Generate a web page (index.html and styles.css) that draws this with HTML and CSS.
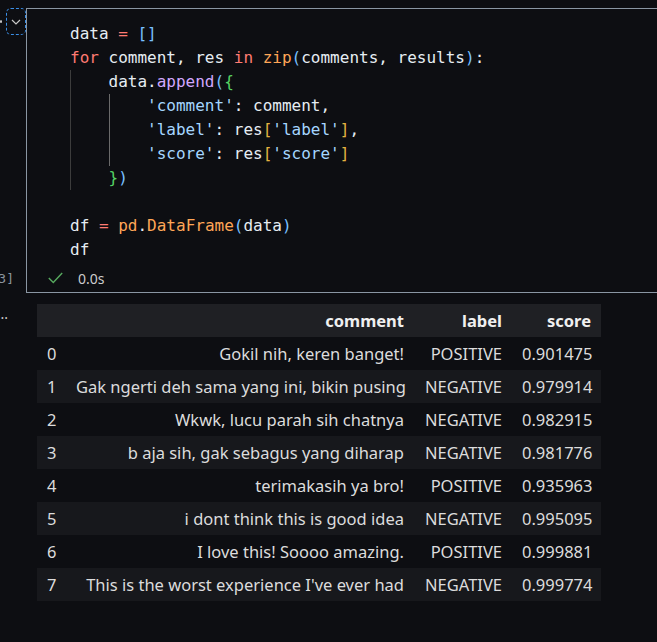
FILE: index.html
```html
<!DOCTYPE html>
<html lang="en">
<head>
<meta charset="utf-8">
<title>Notebook cell</title>
<link rel="stylesheet" href="styles.css">
</head>
<body>
<div class="cell">
  <div class="gutter">
    <div class="gutter-top">
      <span class="dot"></span>
      <button class="toggle" type="button" aria-label="Collapse">
        <svg width="10" height="6" viewBox="0 0 10 6"><path d="M1 1 L5 5 L9 1" fill="none" stroke="#c8c8c8" stroke-width="1.2"/></svg>
      </button>
    </div>
    <div class="exec-count"><span>[3]</span></div>
  </div>
  <div class="cell-box">
    <div class="code">
      <div class="line">data <span class="op">=</span> <span class="b1">[]</span></div>
      <div class="line"><span class="kw">for</span> comment, res <span class="kw">in</span> <span class="cls">zip</span><span class="b1">(</span>comments, results<span class="b1">)</span>:</div>
      <div class="line"><span class="ig">    </span>data.<span class="fn">append</span><span class="b1">(</span><span class="b2">{</span></div>
      <div class="line"><span class="ig">    </span><span class="ig ig-active">    </span><span class="str">'comment'</span>: comment,</div>
      <div class="line"><span class="ig">    </span><span class="ig ig-active">    </span><span class="str">'label'</span>: res<span class="b3">[</span><span class="str">'label'</span><span class="b3">]</span>,</div>
      <div class="line"><span class="ig">    </span><span class="ig ig-active">    </span><span class="str">'score'</span>: res<span class="b3">[</span><span class="str">'score'</span><span class="b3">]</span></div>
      <div class="line"><span class="ig">    </span><span class="b2">}</span><span class="b1">)</span></div>
      <div class="line"></div>
      <div class="line">df <span class="op">=</span> <span class="cls">pd</span>.<span class="cls">DataFrame</span><span class="b1">(</span>data<span class="b1">)</span></div>
      <div class="line">df</div>
    </div>
    <div class="status">
      <svg class="check" width="15" height="12" viewBox="0 0 15 12"><path d="M0.8 6 L5.3 10.6 L14.2 1" fill="none" stroke="#57a95f" stroke-width="1.4"/></svg>
      <span class="time">0.0s</span>
    </div>
  </div>
</div>
<div class="output">
  <div class="out-gutter"><div class="more"><span>...</span></div></div>
  <table class="df">
    <colgroup><col class="c-idx"><col class="c-comment"><col class="c-label"><col class="c-score"></colgroup>
    <thead>
      <tr><th></th><th>comment</th><th>label</th><th>score</th></tr>
    </thead>
    <tbody>
      <tr><td class="idx">0</td><td>Gokil nih, keren banget!</td><td>POSITIVE</td><td>0.901475</td></tr>
      <tr><td class="idx">1</td><td>Gak ngerti deh sama yang ini, bikin pusing</td><td>NEGATIVE</td><td>0.979914</td></tr>
      <tr><td class="idx">2</td><td>Wkwk, lucu parah sih chatnya</td><td>NEGATIVE</td><td>0.982915</td></tr>
      <tr><td class="idx">3</td><td>b aja sih, gak sebagus yang diharap</td><td>NEGATIVE</td><td>0.981776</td></tr>
      <tr><td class="idx">4</td><td>terimakasih ya bro!</td><td>POSITIVE</td><td>0.935963</td></tr>
      <tr><td class="idx">5</td><td>i dont think this is good idea</td><td>NEGATIVE</td><td>0.995095</td></tr>
      <tr><td class="idx">6</td><td>I love this! Soooo amazing.</td><td>POSITIVE</td><td>0.999881</td></tr>
      <tr><td class="idx">7</td><td>This is the worst experience I've ever had</td><td>NEGATIVE</td><td>0.999774</td></tr>
    </tbody>
  </table>
</div>
</body>
</html>
```

FILE: styles.css
```css
* { box-sizing: border-box; }
html, body { margin: 0; height: 100%; }
body {
  background: #0d0e12;
  overflow: hidden;
  font-family: "Noto Sans", "Open Sans", sans-serif;
  color: #d4d4d4;
}

/* ---- code cell ---- */
.cell {
  display: flex;
  margin-top: 8px;
  margin-right: -2px;
}
.gutter {
  width: 26px;
  flex: none;
  display: flex;
  flex-direction: column;
  justify-content: space-between;
}
.gutter-top {
  display: flex;
  align-items: center;
  gap: 4px;
}
.dot {
  width: 2px;
  height: 3px;
  border-radius: 50%;
  background: #cfcfcf;
}
.toggle {
  width: 20px;
  height: 27px;
  padding: 0;
  border: 1px dashed #3a8ee6;
  border-radius: 5px;
  background: transparent;
  display: flex;
  align-items: center;
  justify-content: center;
}
.exec-count {
  width: 14px;
  height: 24px;
  margin-bottom: 3px;
  display: flex;
  justify-content: flex-end;
  align-items: center;
  font: 13px "DejaVu Sans Mono", monospace;
  color: #8b949e;
  white-space: nowrap;
}
.cell-box {
  flex: 1;
  border: 1px solid #8a96a3;
  padding: 13px 0 2px 0;
}
.code {
  padding-left: 43px;
  font: 16px/24px "DejaVu Sans Mono", "Liberation Mono", monospace;
  color: #e6edf3;
}
.line {
  height: 24px;
  white-space: pre;
}
.kw, .op { color: #ff7b72; }
.fn { color: #d2a8ff; }
.cls { color: #ffa657; }
.str { color: #a5d6ff; }
.b1 { color: #79c0ff; }
.b2 { color: #56d364; }
.b3 { color: #e3b341; }
.ig {
  display: inline-block;
  height: 24px;
  vertical-align: top;
  background: linear-gradient(#3c3c3c, #3c3c3c) no-repeat left top / 1px 100%;
}
.ig-active {
  background-image: linear-gradient(#6a6a6a, #6a6a6a);
}
.status {
  margin-top: 4px;
  height: 24px;
  padding-left: 21px;
  display: flex;
  align-items: center;
  gap: 15px;
}
.time {
  font-size: 14px;
  color: #cccccc;
}

/* ---- output ---- */
.output {
  display: flex;
  margin-top: 11px;
}
.out-gutter {
  width: 37px;
  flex: none;
  padding-top: 2px;
}
.more {
  width: 8px;
  display: flex;
  justify-content: flex-end;
  font-size: 14px;
  line-height: 16px;
  color: #cccccc;
  white-space: nowrap;
}
table.df {
  border-collapse: collapse;
  border-spacing: 0;
  table-layout: fixed;
  width: 564px;
  font-size: 16.5px;
}
.c-idx { width: 29px; }
.c-comment { width: 348px; }
.c-label { width: 98px; }
.c-score { width: 89px; }
.df th, .df td {
  height: 33px;
  padding: 0 10px;
  text-align: right;
  vertical-align: middle;
  white-space: nowrap;
  line-height: 20px;
}
.df th {
  font-weight: 700;
  color: #f0f0f0;
}
.df td { color: #dcdcdc; }
.df thead tr { background: #1f2024; }
.df tbody tr:nth-child(even) { background: #17181c; }
.df td.idx { text-align: left; }
```
